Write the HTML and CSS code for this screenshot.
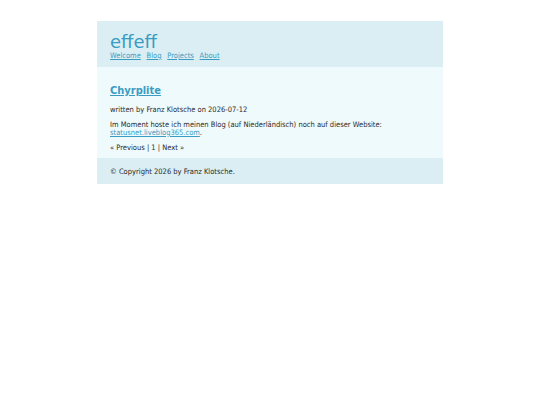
FILE: index.html
```html
<!DOCTYPE html>
<html>
<head>
<meta charset="utf-8">
<link rel="stylesheet" href="styles.css">
</head>
<body>
<div class="page">
  <div class="header">
    <div class="site-title">effeff</div>
    <div class="nav">
      <a href="#">Welcome</a>
      <a href="#">Blog</a>
      <a href="#">Projects</a>
      <a href="#">About</a>
    </div>
  </div>
  <div class="content">
    <h1 class="post-title"><a href="#">Chyrplite</a></h1>
    <p class="meta">written by Franz Klotsche on 2026-07-12</p>
    <p class="body">Im Moment hoste ich meinen Blog (auf Niederländisch) noch auf dieser Website:<br><a href="#">statusnet.liveblog365.com</a>.</p>
    <p class="pager">« Previous | 1 | Next »</p>
  </div>
  <div class="footer">© Copyright 2026 by Franz Klotsche.</div>
</div>
</body>
</html>
```
FILE: styles.css
```css
html, body { margin: 0; padding: 0; background: #ffffff; }
body { font-family: "DejaVu Sans Condensed", "DejaVu Sans", Verdana, sans-serif; font-size: 7.5px; color: #2a2a2a; }
.page { width: 346px; margin: 21px 0 0 97px; }
.header { background: #daeef4; padding: 11px 13px 7px; }
.site-title { font-family: "DejaVu Sans", Verdana, sans-serif; font-size: 18px; color: #3a9cc2; line-height: 19px; }
.nav { line-height: 9px; }
.nav a { color: #3a9cc2; margin-right: 3.6px; }
.content { background: #effafd; padding: 17px 13px 6px; }
.post-title { margin: 0 0 9px; font-size: 11px; line-height: 13px; font-weight: bold; }
.post-title a { color: #3a9cc2; }
.content p { margin: 0; line-height: 8px; }
.content .meta { margin-bottom: 7px; }
.content .body { margin-bottom: 7px; }
.content a { color: #3a9cc2; }
.footer { background: #daeef4; padding: 9px 13px 7px; line-height: 10px; }
```
